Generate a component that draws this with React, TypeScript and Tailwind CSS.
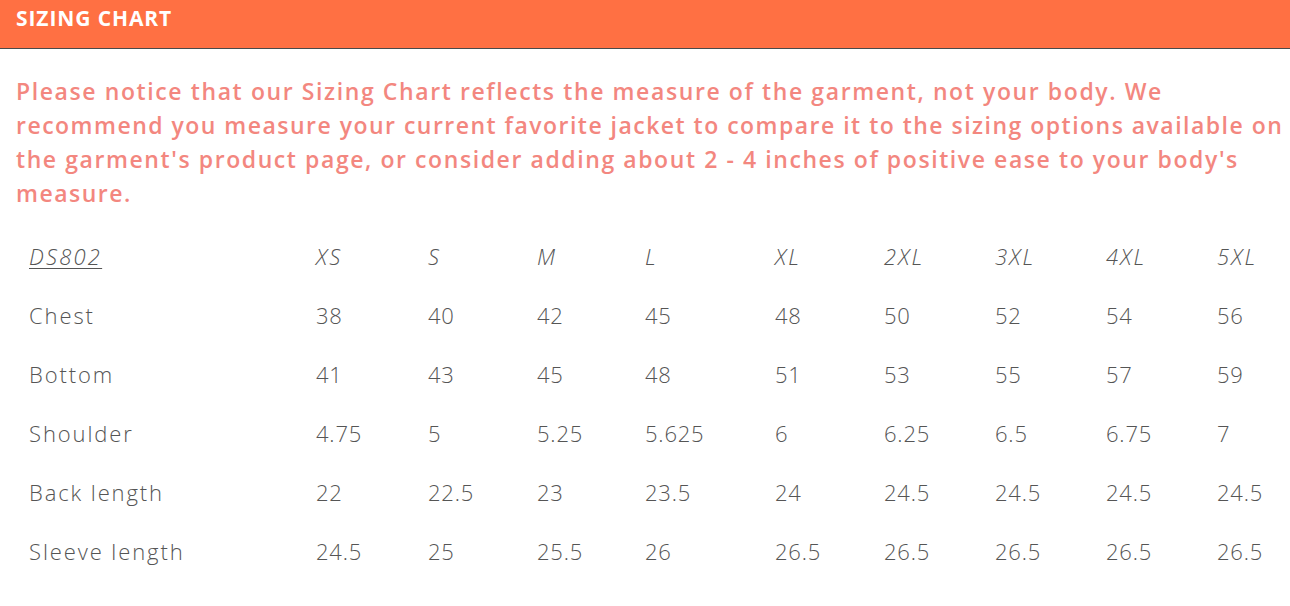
const sizes = ["XS", "S", "M", "L", "XL", "2XL", "3XL", "4XL", "5XL"];

const rows: [string, string[]][] = [
  ["Chest", ["38", "40", "42", "45", "48", "50", "52", "54", "56"]],
  ["Bottom", ["41", "43", "45", "48", "51", "53", "55", "57", "59"]],
  ["Shoulder", ["4.75", "5", "5.25", "5.625", "6", "6.25", "6.5", "6.75", "7"]],
  ["Back length", ["22", "22.5", "23", "23.5", "24", "24.5", "24.5", "24.5", "24.5"]],
  ["Sleeve length", ["24.5", "25", "25.5", "26", "26.5", "26.5", "26.5", "26.5", "26.5"]],
];

// column start offsets taken from the chart
const cols = "grid grid-cols-[287px_112px_109px_108px_130px_109px_111px_111px_111px_60px]";

export default function App() {
  return (
    <div className="w-[1290px] h-[606px] bg-white overflow-hidden font-['Open_Sans',sans-serif]">
      <div className="h-[49px] bg-[#ff7043] border-b border-[#4a4a4a] px-4 pt-[3px]">
        <h2 className="text-white font-bold text-[21px] tracking-[0.9px]">SIZING CHART</h2>
      </div>

      <p className="mt-[25px] px-4 text-[#f3877f] font-semibold text-[23px] leading-[34px] whitespace-nowrap">
        <span className="block tracking-[1.6px]">
          Please notice that our Sizing Chart reflects the measure of the garment, not your body. We
        </span>
        <span className="block tracking-[1.48px]">
          recommend you measure your current favorite jacket to compare it to the sizing options available on
        </span>
        <span className="block tracking-[1.58px]">
          the garment's product page, or consider adding about 2 - 4 inches of positive ease to your body's
        </span>
        <span className="block tracking-[1.5px]">measure.</span>
      </p>

      <div className="mt-[17px] pl-[29px] text-[#555] text-[22px] font-light">
        <div className={`${cols} h-[59px] items-center italic tracking-[2.2px]`}>
          <span className="underline underline-offset-[3px] decoration-1">DS802</span>
          {sizes.map((s) => (
            <span key={s}>{s}</span>
          ))}
        </div>
        {rows.map(([label, vals]) => (
          <div key={label} className={`${cols} h-[59px] items-center tracking-[0.8px]`}>
            <span className="tracking-[1.9px]">{label}</span>
            {vals.map((v, i) => (
              <span key={i}>{v}</span>
            ))}
          </div>
        ))}
      </div>
    </div>
  );
}
